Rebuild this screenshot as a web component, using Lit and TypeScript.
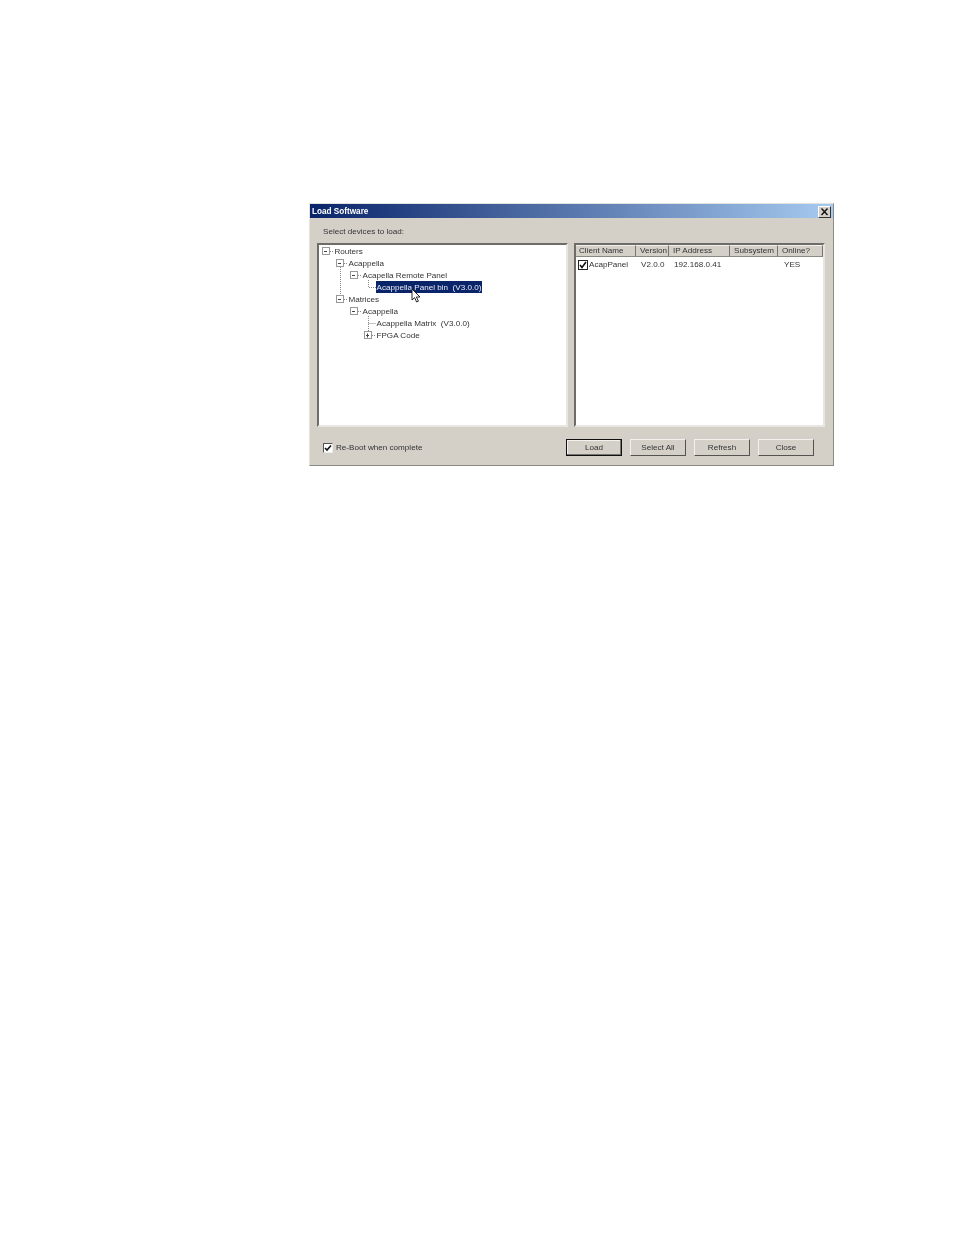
import { LitElement, html, css, svg } from "lit";
import { customElement } from "lit/decorators.js";

const rows = [
  { t: "Routers", l: 0 },
  { t: "Acappella", l: 1 },
  { t: "Acapella Remote Panel", l: 2 },
  { t: "Acappella Panel bin  (V3.0.0)", l: 3, sel: true },
  { t: "Matrices", l: 1 },
  { t: "Acappella", l: 2 },
  { t: "Acappella Matrix  (V3.0.0)", l: 3 },
  { t: "FPGA Code", l: 3 },
];

const boxes: [number, number][] = [[7, 6], [21, 18], [35, 30], [21, 54], [35, 66], [49, 90]];
const columns = [
  ["Client Name", 60], ["Version", 33], ["IP Address", 61], ["Subsystem", 48], ["Online?", 45],
] as const;

@customElement("app-root")
export class AppRoot extends LitElement {
  static styles = css`
    :host { display: block; height: 1235px; background: #fff; padding: 203px 0 0 309px; box-sizing: border-box; }
    .dlg {
      width: 525px; height: 263px; box-sizing: border-box; background: #d4d0c8;
      border: 1px solid; border-color: #e4e2dc #8c8a84 #8c8a84 #e4e2dc;
      font: 8.1px/12px "Liberation Sans", Arial, sans-serif; color: #333;
      display: flex; flex-direction: column; filter: blur(0.35px);
    }
    .title {
      height: 14px; padding: 1px 2px 0 2px; box-sizing: border-box; display: flex; align-items: center; justify-content: space-between;
      background: linear-gradient(90deg, #0a246a, #a6caf0);
      color: #fff; font-weight: 700; font-size: 8.2px;
    }
    .x { width: 11px; height: 10px; background: #d4d0c8; border: 1px solid; border-color: #fff #333 #333 #fff; display: flex; }
    .x svg { width: 11px; height: 10px; }
    .prompt { margin: 8px 0 0 13px; height: 11px; }
    .panes { display: flex; gap: 6px; margin: 6px 0 0 7px; }
    .pane {
      width: 251px; height: 184px; box-sizing: border-box; background: #fff;
      border: 2px solid; border-color: #6e6c68 #e8e6e0 #e8e6e0 #6e6c68; position: relative;
    }
    .lines { position: absolute; left: 0; top: 0; width: 247px; height: 180px; }
    .row { height: 12px; display: flex; align-items: center; position: relative; white-space: pre; }
    .label { padding: 1px 1px 0; line-height: 11px; }
    .sel { background: #0a246a; color: #e8ecf4; }
    .head { display: flex; height: 12px; }
    .hc {
      box-sizing: border-box; height: 12px; padding-left: 4px; background: #d4d0c8; line-height: 10px;
      border-right: 1px solid #77756f; border-bottom: 1px solid #8a8882; border-top: 1px solid #f4f2ee;
    }
    .hc:first-child { padding-left: 3px; }
    .item { display: grid; grid-template-columns: 65px 33px 110px 40px; height: 12px; margin-top: 2px; align-items: center; }
    .first { display: flex; align-items: center; }
    .chk { width: 8px; height: 8px; border: 1px solid #222; margin: 0 1px 0 2px; display: flex; background: #fff; }
    .chk svg { width: 8px; height: 8px; }
    .foot { display: flex; align-items: center; margin: 12px 0 0 13px; }
    .reboot { display: flex; align-items: center; gap: 3px; width: 243px; }
    .rb { width: 8px; height: 8px; background: #fff; border: 1px solid; border-color: #55534f #eee #eee #55534f; display: flex; }
    .rb svg { width: 8px; height: 8px; }
    .btns { display: flex; gap: 8px; }
    .btn {
      width: 56px; height: 17px; box-sizing: border-box; background: #d4d0c8; text-align: center; line-height: 15px;
      border: 1px solid; border-color: #f4f2ee #55534f #55534f #f4f2ee; font: inherit; color: inherit; padding: 0;
    }
    .btn.def { border: 1px solid #111; box-shadow: inset -1px -1px 0 #77756f, inset 1px 1px 0 #f4f2ee; }
    .cursor { position: absolute; left: 92px; top: 43px; width: 11px; height: 16px; }
  `;

  render() {
    return html`<div class="dlg">
      <div class="title"><span>Load Software</span>
        <span class="x"><svg viewBox="0 0 11 10"><path d="M2.5 1.5l6 6.5M8.5 1.5l-6 6.5" stroke="#111" stroke-width="1.4"/></svg></span>
      </div>
      <div class="prompt">Select devices to load:</div>
      <div class="panes">
        <div class="pane">
          <svg class="lines" viewBox="0 0 247 180">
            <g stroke="#8a8a8a" stroke-width="1" stroke-dasharray="1 1" fill="none">
              <path d="M21.5 22V50M11 6.5h3M25 18.5h3M39 30.5h3M25 54.5h3M39 66.5h3M53 90.5h3"/>
              <path d="M49.5 35V42.5H57M49.5 71V87M49.5 78.5H57"/>
            </g>
            <g fill="#fff" stroke="#999">
              ${boxes.map(([x, y]) => svg`<rect x=${x - 3.5} y=${y - 3.5} width="7" height="7"/>`)}
            </g>
            <path stroke="#444" d="M5 6.5h3M19 18.5h3M33 30.5h3M19 54.5h3M33 66.5h3M47 90.5h3M48.5 88.5v4"/>
          </svg>
          ${rows.map(r => html`<div class="row" style="padding-left:${14.5 + r.l * 14}px"><span class="label ${r.sel ? "sel" : ""}">${r.t}</span></div>`)}
          <svg class="cursor" viewBox="0 0 11 16"><path d="M1 1v11l2.6-2.4 2 4.4 1.8-.8-2-4.2H9z" fill="#fff" stroke="#111" stroke-width=".9"/></svg>
        </div>
        <div class="pane">
          <div class="head">${columns.map(([n, w]) => html`<div class="hc" style="width:${w}px">${n}</div>`)}</div>
          <div class="item">
            <span class="first"><span class="chk"><svg viewBox="0 0 8 8"><path d="M1 4l2 2.4L7 1" fill="none" stroke="#111" stroke-width="1.6"/></svg></span>AcapPanel</span>
            <span>V2.0.0</span><span>192.168.0.41</span><span>YES</span>
          </div>
        </div>
      </div>
      <div class="foot">
        <div class="reboot"><span class="rb"><svg viewBox="0 0 8 8"><path d="M1 4l2 2L7 1.5" fill="none" stroke="#111" stroke-width="1.6"/></svg></span>Re-Boot when complete</div>
        <div class="btns">
          <button class="btn def">Load</button><button class="btn">Select All</button><button class="btn">Refresh</button><button class="btn">Close</button>
        </div>
      </div>
    </div>`;
  }
}
